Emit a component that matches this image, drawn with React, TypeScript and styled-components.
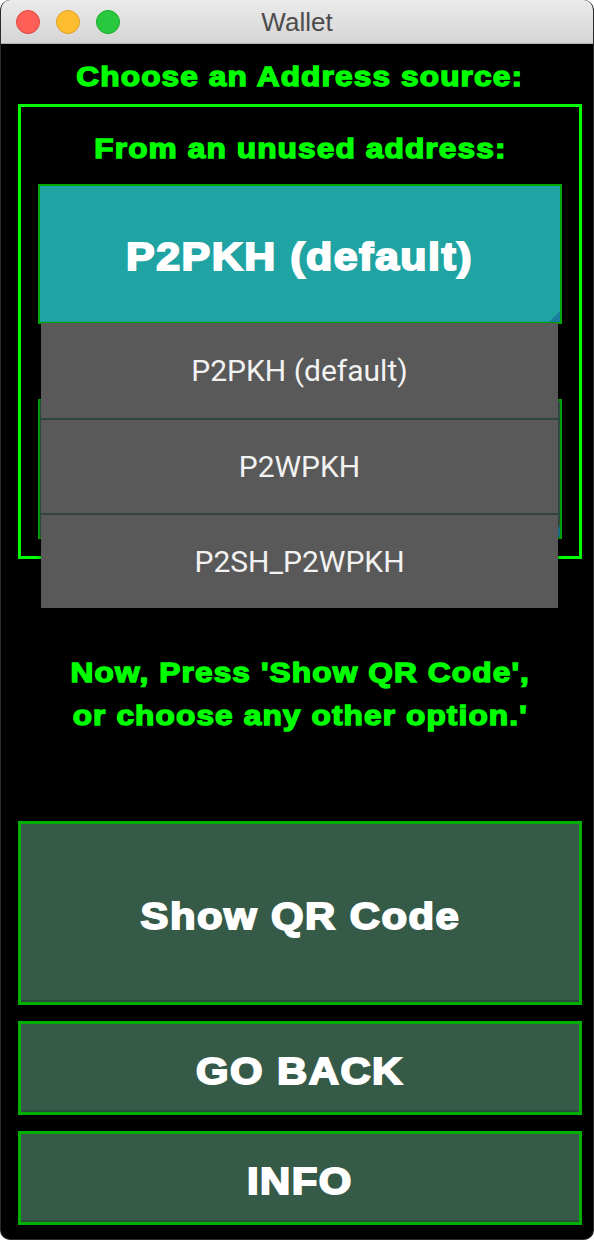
import styled, { createGlobalStyle, css } from "styled-components";

const GlobalStyle = createGlobalStyle`
  html, body {
    margin: 0;
    padding: 0;
    background: #ffffff;
  }
  * {
    box-sizing: border-box;
  }
`;

// kivy-ish heavy bold label text
const heavyText = css`
  font-family: "Liberation Sans", Arial, sans-serif;
  font-weight: bold;
  -webkit-text-stroke: 0.05em currentColor;
  text-align: center;
`;

// the app's font is wider than Arial bold, so widen the glyphs a bit
const Wide = styled.span`
  display: inline-block;
  letter-spacing: 0.035em;
  transform: scaleX(1.13);
  transform-origin: center;
`;

const Window = styled.div`
  width: 594px;
  height: 1240px;
  background: #000000;
  border-radius: 10px;
  overflow: hidden;
  border: 1px solid #2a2a2a;
  border-top: none;
  display: flex;
  flex-direction: column;
`;

const TitleBar = styled.div`
  height: 44px;
  flex-shrink: 0;
  position: relative;
  display: flex;
  align-items: center;
  justify-content: center;
  padding-top: 2px;
  background: linear-gradient(#ebebeb, #d5d5d5);
  border-bottom: 1px solid #b1b1b1;
  font-family: "Liberation Sans", Arial, sans-serif;
  font-size: 26px;
  color: #4c4c4c;
`;

const Lights = styled.div`
  position: absolute;
  left: 15px;
  top: 10px;
  display: flex;
  gap: 16px;
`;

const Light = styled.span<{ $fill: string; $edge: string }>`
  width: 24px;
  height: 24px;
  border-radius: 50%;
  background: ${(p) => p.$fill};
  border: 1px solid ${(p) => p.$edge};
`;

const Content = styled.div`
  flex: 1;
  display: flex;
  flex-direction: column;
  padding: 0 11px 14px 17px;
`;

const GreenText = styled.div`
  ${heavyText};
  font-size: 28px;
  color: #00ff00;
`;

const Heading = styled(GreenText)`
  line-height: 34px;
  margin-top: 16px;
  margin-bottom: 10px;
`;

const SourceBox = styled.div`
  position: relative;
  height: 455px;
  border: 3px solid #00ff00;
  padding: 0 17px;
  display: flex;
  flex-direction: column;
`;

const SubHeading = styled(GreenText)`
  line-height: 34px;
  margin-top: 25px;
  margin-bottom: 18px;
`;

const Spinner = styled.div<{ $active?: boolean }>`
  ${heavyText};
  position: relative;
  height: 140px;
  flex-shrink: 0;
  border: 2px solid #00a800;
  background: ${(p) => (p.$active ? "#1fa3a3" : "#355a48")};
  display: flex;
  align-items: center;
  justify-content: center;
  padding-top: 6px;
  font-size: 38px;
  color: #ffffff;
  &::after {
    content: "";
    position: absolute;
    right: 0;
    bottom: 0;
    border-style: solid;
    border-width: 0 0 11px 11px;
    border-color: transparent transparent #1b7fa0 transparent;
  }
`;

const SpinnerGap = styled.div`
  height: 75px;
  flex-shrink: 0;
`;

const Popup = styled.div`
  position: absolute;
  left: 20px;
  top: 216px;
  width: 517px;
  display: flex;
  flex-direction: column;
  background: #595959;
  box-shadow: 0 2px 4px rgba(0, 0, 0, 0.5);
`;

const PopupItem = styled.div<{ $first?: boolean }>`
  height: 95px;
  display: flex;
  align-items: center;
  justify-content: center;
  border-top: ${(p) => (p.$first ? "none" : "2px solid #2f473b")};
  font-family: Roboto, "Noto Sans", sans-serif;
  font-size: 30px;
  color: #f2f2f2;
`;

const Message = styled(GreenText)`
  line-height: 43px;
  margin-top: 92px;
`;

const Spacer = styled.div`
  flex: 1;
`;

const ButtonStack = styled.div`
  display: flex;
  flex-direction: column;
  gap: 16px;
`;

const ActionButton = styled.div<{ $tall?: boolean }>`
  ${heavyText};
  height: ${(p) => (p.$tall ? "184px" : "94px")};
  border: 3px solid #00b000;
  background: #355a48;
  box-shadow: inset 0 -2px 0 #2c4a3b;
  display: flex;
  align-items: center;
  justify-content: center;
  padding-top: 7px;
  font-size: 37px;
  color: #ffffff;
`;

const options = ["P2PKH (default)", "P2WPKH", "P2SH_P2WPKH"];

export default function App() {
  return (
    <>
      <GlobalStyle />
      <Window>
        <TitleBar>
          <Lights>
            <Light $fill="#ff5f57" $edge="#e0443e" />
            <Light $fill="#febc2e" $edge="#dea123" />
            <Light $fill="#28c840" $edge="#1aab29" />
          </Lights>
          Wallet
        </TitleBar>
        <Content>
          <Heading>
            <Wide>Choose an Address source:</Wide>
          </Heading>
          <SourceBox>
            <SubHeading>
              <Wide>From an unused address:</Wide>
            </SubHeading>
            <Spinner $active>
              <Wide>P2PKH (default)</Wide>
            </Spinner>
            <SpinnerGap />
            <Spinner />
            <Popup>
              {options.map((o, i) => (
                <PopupItem key={o} $first={i === 0}>
                  {o}
                </PopupItem>
              ))}
            </Popup>
          </SourceBox>
          <Message>
            <Wide>
              Now, Press 'Show QR Code',
              <br />
              or choose any other option.'
            </Wide>
          </Message>
          <Spacer />
          <ButtonStack>
            <ActionButton $tall>
              <Wide>Show QR Code</Wide>
            </ActionButton>
            <ActionButton>
              <Wide>GO BACK</Wide>
            </ActionButton>
            <ActionButton>
              <Wide>INFO</Wide>
            </ActionButton>
          </ButtonStack>
        </Content>
      </Window>
    </>
  );
}
